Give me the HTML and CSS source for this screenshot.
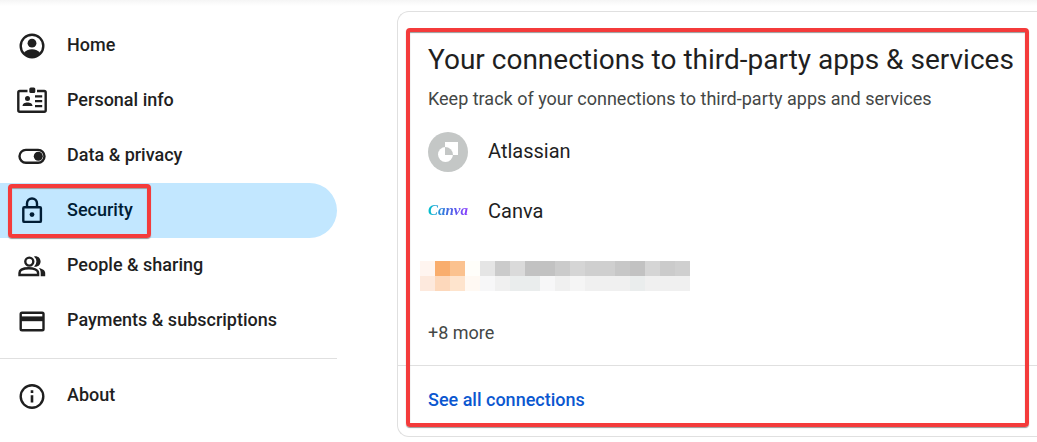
FILE: index.html
```html
<!DOCTYPE html>
<html lang="en">
<head>
    <meta charset="UTF-8">
    <meta name="viewport" content="width=device-width, initial-scale=1.0">
    <title>Security</title>
    <link rel="stylesheet" href="styles.css">
</head>
<body>
    <div class="page">
        <!-- Side navigation -->
        <nav class="sidebar">
            <a href="#" class="nav-item">
                <svg class="nav-icon" viewBox="0 0 30 30">
                    <circle cx="15" cy="15" r="11.3" fill="none" stroke="currentColor" stroke-width="2.4"/>
                    <circle cx="15" cy="12.2" r="4.4" fill="currentColor"/>
                    <path d="M6.5 22.2c2-2.6 5.2-4 8.5-4s6.500 1.400 8.500 4A11.500 11.500 0 0 1 6.500 22.200z" fill="currentColor"/>
                </svg>
                <span class="nav-label">Home</span>
            </a>
            <a href="#" class="nav-item">
                <svg class="nav-icon" viewBox="0 0 30 30">
                    <rect x="1.300" y="5" width="27.400" height="20.700" rx="1.500" fill="none" stroke="currentColor" stroke-width="2.400"/>
                    <path d="M10.500 3h9.500v4.500h-9.500z" fill="#fff"/>
                    <rect x="12.300" y="1.500" width="6" height="5.500" rx="1.500" fill="currentColor"/>
                    <circle cx="10.500" cy="12.500" r="2.500" fill="currentColor"/>
                    <path d="M5.500 20c0-2.500 2.500-3.500 5-3.500s5 1 5 3.500z" fill="currentColor"/>
                    <path d="M18 10.300h7.200M18 15.200h7.200M18 20.100h7.200" stroke="currentColor" stroke-width="2.200"/>
                </svg>
                <span class="nav-label">Personal info</span>
            </a>
            <a href="#" class="nav-item">
                <svg class="nav-icon" viewBox="0 0 30 30">
                    <rect x="2.500" y="8.900" width="25" height="12.800" rx="6.400" fill="none" stroke="currentColor" stroke-width="2.400"/>
                    <circle cx="21.300" cy="15.300" r="4.500" fill="currentColor"/>
                </svg>
                <span class="nav-label">Data &amp; privacy</span>
            </a>
            <a href="#" class="nav-item active">
                <svg class="nav-icon" viewBox="0 0 30 30">
                    <rect x="6.300" y="11.300" width="17.600" height="14.600" rx="1" fill="none" stroke="currentColor" stroke-width="2.400"/>
                    <path d="M10 11V7.500a5 5 0 0 1 10 0V11" fill="none" stroke="currentColor" stroke-width="2.400"/>
                    <circle cx="15" cy="18.600" r="2.400" fill="currentColor"/>
                </svg>
                <span class="nav-label">Security</span>
                <span class="marker"></span>
            </a>
            <a href="#" class="nav-item">
                <svg class="nav-icon" viewBox="0 0 30 30">
                    <circle cx="12.300" cy="10.600" r="4" fill="none" stroke="currentColor" stroke-width="2.400"/>
                    <path d="M2.500 24v-2c0-3.500 5-4.700 9.300-4.700s9.300 1.200 9.300 4.700v2z" fill="none" stroke="currentColor" stroke-width="2.400"/>
                    <path d="M17 15.700a6.600 6.600 0 0 0 0-10.200c3.500-.8 6.600 1.600 6.600 5.100s-3.100 5.900-6.600 5.100z" fill="currentColor"/>
                    <path d="M21.800 17c3.500.7 6.400 2.200 6.400 5v3.200h-4.500V22c0-2-.6-3.600-1.900-5z" fill="currentColor"/>
                </svg>
                <span class="nav-label">People &amp; sharing</span>
            </a>
            <a href="#" class="nav-item">
                <svg class="nav-icon" viewBox="0 0 30 30">
                    <rect x="3.700" y="6.700" width="22.800" height="17.500" rx="1.300" fill="none" stroke="currentColor" stroke-width="2.400"/>
                    <path d="M3.500 12.800h23" stroke="currentColor" stroke-width="4.800"/>
                </svg>
                <span class="nav-label">Payments &amp; subscriptions</span>
            </a>
            <hr class="divider">
            <a href="#" class="nav-item">
                <svg class="nav-icon" viewBox="0 0 30 30">
                    <circle cx="15" cy="15.500" r="11.300" fill="none" stroke="currentColor" stroke-width="2.400"/>
                    <path d="M15 14.300v7.200M15 9.300v2.600" stroke="currentColor" stroke-width="2.600"/>
                </svg>
                <span class="nav-label">About</span>
            </a>
        </nav>

        <!-- Third-party connections -->
        <main class="content">
            <section class="card">
                <div class="card-body">
                    <h1>Your connections to third-party apps &amp; services</h1>
                    <p class="subtitle">Keep track of your connections to third-party apps and services</p>
                    <ul class="apps">
                        <li class="app">
                            <svg class="app-logo" viewBox="0 0 40 40">
                                <circle cx="20" cy="20" r="20" fill="#c4c7c6"/>
                                <path d="M17 10h13v13H17z" fill="#fff"/>
                                <circle cx="17.500" cy="22.500" r="7.500" fill="#fff"/>
                                <path d="M17 15v8h8a8 8 0 0 0-8-8z" fill="#c4c7c6"/>
                            </svg>
                            <span class="app-name">Atlassian</span>
                        </li>
                        <li class="app">
                            <span class="canva-logo">Canva</span>
                            <span class="app-name">Canva</span>
                        </li>
                        <li class="app">
                            <svg class="redacted" viewBox="0 0 18 2" shape-rendering="crispEdges">
                                <path fill="#fff5f0" d="M0 0h1v1H0z"/>
                                <path fill="#f9ad6d" d="M1 0h1v1H1z"/>
                                <path fill="#fbc28f" d="M2 0h1v1H2z"/>
                                <path fill="#fffefa" d="M3 0h1v1H3z"/>
                                <path fill="#e5e5e5" d="M4 0h1v1H4z"/>
                                <path fill="#cbcbcb" d="M5 0h1v1H5zM9 0h1v1H9zM16 0h1v1h-1z"/>
                                <path fill="#dadada" d="M6 0h1v1H6z"/>
                                <path fill="#c2c2c2" d="M7 0h2v1H7zM14 0h1v1h-1z"/>
                                <path fill="#d5d5d5" d="M10 0h1v1h-1zM15 0h1v1h-1z"/>
                                <path fill="#cfcfcf" d="M11 0h2v1h-2zM17 0h1v1h-1z"/>
                                <path fill="#c7c7c7" d="M13 0h1v1h-1z"/>
                                <path fill="#fde9dd" d="M0 1h1v1H0z"/>
                                <path fill="#fdd8bb" d="M1 1h1v1H1z"/>
                                <path fill="#fee4cd" d="M2 1h1v1H2z"/>
                                <path fill="#fff9f3" d="M3 1h1v1H3z"/>
                                <path fill="#f7f7f8" d="M4 1h1v1H4zM8 1h1v1H8z"/>
                                <path fill="#f0f0f0" d="M5 1h1v1H5zM9 1h1v1H9zM11 1h3v1h-3zM15 1h3v1h-3z"/>
                                <path fill="#eaeded" d="M6 1h2v1H6zM14 1h1v1h-1z"/>
                                <path fill="#f5f5f5" d="M10 1h1v1h-1z"/>
                            </svg>
                        </li>
                    </ul>
                    <p class="more">+8 more</p>
                </div>
                <div class="card-footer">
                    <a href="#" class="see-all">See all connections</a>
                </div>
                <span class="marker"></span>
            </section>
        </main>
    </div>
</body>
</html>
```
FILE: styles.css
```css
* {
    box-sizing: border-box;
}

body {
    margin: 0;
    background: #fff;
    color: #1f1f1f;
    font-family: Roboto, "Liberation Sans", sans-serif;
    font-size: 18px;
    line-height: 24px;
}

.page {
    display: flex;
    gap: 60px;
    background: linear-gradient(#f5f5f5, #fff 6px);
}

.sidebar {
    flex: 0 0 337px;
    padding-top: 18px;
}

.nav-item {
    position: relative;
    display: flex;
    align-items: center;
    gap: 20px;
    height: 55px;
    padding-left: 17px;
    border-radius: 0 28px 28px 0;
    color: #1f1f1f;
    font-weight: 500;
    text-decoration: none;
}

.nav-item.active {
    background: #c2e7ff;
    color: #001d35;
}

.nav-icon {
    width: 30px;
    height: 30px;
}

.nav-label,
.app-name {
    padding-bottom: 2px;
}

.divider {
    margin: 10px 0 9px;
    border: 0;
    border-top: 1px solid #e0e0e0;
}

/* Red highlight frames */
.marker {
    position: absolute;
    border: 4px solid #f43b3b;
    border-radius: 4px;
    box-shadow: 0 1px 1px #999, inset 0 1px 1px #999;
    pointer-events: none;
}

.nav-item .marker {
    top: 1px;
    left: 8px;
    width: 143px;
    height: 54px;
}

.card .marker {
    top: 16px;
    right: 8px;
    bottom: 9px;
    left: 8px;
}

.content {
    flex: 1;
    min-width: 0;
    padding-top: 11px;
}

.card {
    position: relative;
    border: 1px solid #e0e0e0;
    border-right: 0;
    border-radius: 12px 0 0 12px;
    background: #fff;
}

.card-body {
    padding: 30px 0 20px 30px;
}

h1 {
    margin: 0;
    font-size: 28px;
    font-weight: 400;
    line-height: 36px;
    white-space: nowrap;
}

.subtitle {
    margin: 9px 0 21px;
    color: #444746;
}

.apps {
    display: flex;
    flex-direction: column;
    gap: 20px;
    margin: 0;
    padding: 0;
    list-style: none;
}

.app {
    display: flex;
    align-items: center;
    gap: 20px;
    height: 40px;
    font-size: 20px;
}

.app-logo {
    width: 40px;
    height: 40px;
}

.canva-logo {
    width: 40px;
    padding-bottom: 4px;
    background: linear-gradient(90deg, #00c4cc, #3b6fe0 45%, #8b3dff);
    background-clip: text;
    color: transparent;
    font-family: "Liberation Serif", serif;
    font-size: 15px;
    font-style: italic;
    font-weight: 700;
}

.redacted {
    align-self: flex-end;
    width: 270px;
    height: 30px;
    margin: 0 0 1px -8px;
}

.more {
    margin: 29px 0 0;
    color: #444746;
}

.card-footer {
    padding: 22px 30px 24px;
    border-top: 1px solid #e0e0e0;
}

.see-all {
    color: #0b57d0;
    font-weight: 500;
    text-decoration: none;
}
```
